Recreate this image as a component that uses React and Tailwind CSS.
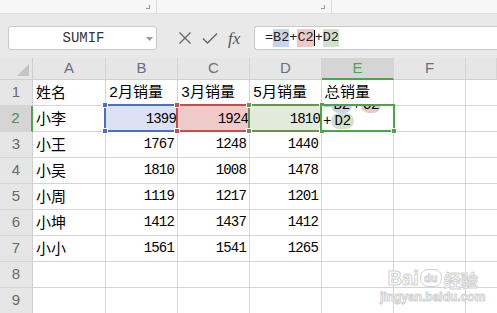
import React from "react";

const cjk = { fontFamily: '"Noto Sans CJK SC", "Noto Sans", sans-serif' };
const mono = { fontFamily: '"Liberation Mono", "DejaVu Sans Mono", monospace' };

const cols = ["A", "B", "C", "D", "E", "F", ""];
const data = [
  ["姓名", "2月销量", "3月销量", "5月销量", "总销量"],
  ["小李", "", "", "", ""],
  ["小王", "1767", "1248", "1440", ""],
  ["小吴", "1810", "1008", "1478", ""],
  ["小周", "1119", "1217", "1201", ""],
  ["小坤", "1412", "1437", "1412", ""],
  ["小小", "1561", "1541", "1265", ""],
  ["", "", "", "", ""],
  ["", "", "", "", ""],
];

function Handle({ cls }) {
  return <div className={`absolute w-[6px] h-[6px] border border-white ${cls}`} />;
}

function SelBox({ left, top, border, fill, handle, children }) {
  return (
    <div
      className={`absolute w-[75px] h-[28px] border-2 ${border}`}
      style={{ left, top }}
    >
      <div className={`w-full h-full ${fill}`} />
      <Handle cls={`-left-[4px] -top-[4px] ${handle}`} />
      <Handle cls={`-right-[4px] -top-[4px] ${handle}`} />
      <Handle cls={`-left-[4px] -bottom-[4px] ${handle}`} />
      <Handle cls={`-right-[4px] -bottom-[4px] ${handle}`} />
      {children}
    </div>
  );
}

export default function App() {
  return (
    <div className="w-[497px] h-[313px] overflow-hidden bg-white relative">
      {/* top strip */}
      <div className="h-[14px] bg-[#f7f7f7] border-b border-[#e0e0e0] flex">
        <div className="w-[157px] border-r border-[#dcdcdc] relative">
          <div className="absolute left-[146px] top-[5px] w-[4px] h-[4px] border-r border-b border-[#999]" />
        </div>
        <div className="w-[175px] border-r border-[#dcdcdc] relative">
          <div className="absolute left-[164px] top-[5px] w-[4px] h-[4px] border-r border-b border-[#999]" />
        </div>
      </div>
      {/* toolbar */}
      <div className="h-[44px] bg-[#e9e9e9] flex items-start pt-[12px]">
        <div className="ml-[8px] w-[149px] h-[24px] bg-white border border-[#c9c9c9] rounded-[3px] flex items-center relative">
          <span className="flex-1 text-center text-[14px] text-[#333] pl-[2px]" style={mono}>SUMIF</span>
          <svg width="7" height="4" className="absolute right-[3px] top-[10px]" viewBox="0 0 7 4">
            <path d="M0 0 L7 0 L3.5 4 Z" fill="#999" />
          </svg>
        </div>
        <div className="w-[97px] h-[24px] flex items-center">
          <svg width="14" height="14" viewBox="0 0 14 14" className="ml-[21px]">
            <path d="M1.5 1.5 L12.5 12.5 M12.5 1.5 L1.5 12.5" stroke="#666" strokeWidth="1.3" fill="none" />
          </svg>
          <svg width="16" height="13" viewBox="0 0 16 13" className="ml-[10px]">
            <path d="M1 6.5 L5.5 11 L15 1.5" stroke="#666" strokeWidth="1.4" fill="none" />
          </svg>
          <span
            className="ml-[10px] text-[17px] italic text-[#555] leading-none"
            style={{ fontFamily: '"Liberation Serif", serif' }}
          >
            fx
          </span>
        </div>
        <div className="flex-1 h-[24px] bg-white border border-[#c9c9c9] border-r-0 rounded-l-[3px] flex items-center pl-[10px] text-[13.5px] text-[#222]" style={mono}>
          <span>=</span>
          <span className="bg-[#c8d4ee] h-[18px] leading-[18px]">B2</span>
          <span>+</span>
          <span className="bg-[#ecc9c9] h-[18px] leading-[18px]">C2</span>
          <span className="w-px h-[16px] bg-black" />
          <span>+</span>
          <span className="bg-[#d3e0cd] h-[18px] leading-[18px]">D2</span>
        </div>
      </div>
      {/* grid */}
      <div className="relative">
        <div className="grid grid-cols-[33px_73px_72px_72px_72px_72px_72px_1fr]">
          <div className="h-[22px] bg-[#e6e6e6] border-r border-b border-[#cfcfcf] relative">
            <svg width="12" height="12" className="absolute right-[3px] bottom-[3px]" viewBox="0 0 12 12">
              <path d="M12 0 L12 12 L0 12 Z" fill="#c4c4c4" />
            </svg>
          </div>
          {cols.map((c, i) => (
            <div
              key={i}
              className={`h-[22px] border-r border-[#d6d6d6] flex items-center justify-center text-[15px] ${
                c === "E"
                  ? "bg-[#d5d5d5] border-b-2 border-b-[#4ea44a] text-[#4ea44a]"
                  : "bg-[#e6e6e6] border-b border-b-[#cfcfcf] text-[#6a7080]"
              }`}
              style={{ fontFamily: '"Liberation Sans", Arial, sans-serif' }}
            >
              {c}
            </div>
          ))}
          {data.map((row, ri) => (
            <React.Fragment key={ri}>
              <div
                className={`h-[26px] border-b border-[#d6d6d6] flex items-center justify-center text-[15px] ${
                  ri === 1
                    ? "bg-[#d5d5d5] border-r-2 border-r-[#4ea44a] text-[#4a8a5a]"
                    : "bg-[#e6e6e6] border-r border-r-[#cfcfcf] text-[#6a6a6a]"
                }`}
                style={{ fontFamily: '"Liberation Sans", Arial, sans-serif' }}
              >
                {ri + 1}
              </div>
              {row.map((v, ci) => (
                <div
                  key={ci}
                  className={`h-[26px] border-r border-b border-[#d4d4d4] flex items-center text-black ${
                    ci === 0 || ri === 0 ? "pl-[3px] text-[15px]" : "justify-end pr-[3px] text-[14px] tracking-[-0.06em]"
                  }`}
                  style={ci === 0 || ri === 0 ? cjk : mono}
                >
                  {ri === 0 && ci > 0 ? (
                    <span>
                      <span style={mono} className="text-[15px]">{v[0]}</span>
                      {v.slice(1)}
                    </span>
                  ) : (
                    v
                  )}
                </div>
              ))}
              <div className="h-[26px] border-r border-b border-[#d4d4d4]" />
              <div className="h-[26px] border-b border-[#d4d4d4]" />
            </React.Fragment>
          ))}
        </div>

        {/* selection overlays */}
        <SelBox left={104} top={46} border="border-[#4b6fc9]" fill="bg-[#dce2f4]" handle="bg-[#4b6fc9]">
          <span className="absolute right-[1px] top-[3px] text-[14px] tracking-[-0.06em]" style={mono}>1399</span>
        </SelBox>
        <SelBox left={176} top={46} border="border-[#c0504d]" fill="bg-[#efcaca]" handle="bg-[#c0504d]">
          <span className="absolute right-[1px] top-[3px] text-[14px] tracking-[-0.06em]" style={mono}>1924</span>
        </SelBox>
        <SelBox left={248} top={46} border="border-[#6e9150]" fill="bg-[#e2eadb]" handle="bg-[#6e9150]">
          <span className="absolute right-[1px] top-[3px] text-[14px] tracking-[-0.06em]" style={mono}>1810</span>
        </SelBox>
        {/* E2 edit cell */}
        <div className="absolute left-[320px] top-[46px] w-[75px] h-[28px] border-2 border-[#4ea44a] bg-white">
          <div className="w-full h-full overflow-hidden flex flex-col justify-end pl-[1px] pb-[1px] text-[14px] text-black" style={mono}>
            <div className="leading-[16px] flex items-center">
              <span>=</span>
              <span className="bg-[#c8d4ee] rounded-full px-[2px]">B2</span>
              <span>+</span>
              <span className="bg-[#ecc9c9] rounded-full px-[2px]">C2</span>
            </div>
            <div className="leading-[16px] h-[18px] flex items-center">
              <span>+</span>
              <span className="bg-[#d3e0cd] rounded-full px-[3px] leading-[16px]">D2</span>
            </div>
          </div>
          <div className="absolute -right-[4px] -bottom-[4px] w-[6px] h-[6px] bg-[#4ea44a] border border-white" />
        </div>

        {/* watermark */}
        <div className="absolute left-[380px] top-[210px] flex flex-col items-center text-white [-webkit-text-stroke:1px_#d2d2d2] pointer-events-none" style={{ fontFamily: '"Liberation Sans", Arial, sans-serif' }}>
          <div className="flex items-end font-bold leading-none">
            <span className="text-[20px]">Bai</span>
            <span className="ml-[1px] mb-[1px] w-[22px] h-[18px] rounded-[8px] border-[1.5px] border-[#d2d2d2] text-[11px] flex items-center justify-center">du</span>
            <span className="ml-[2px] text-[17px]" style={cjk}>经验</span>
          </div>
          <div className="text-[12px] leading-none mt-[3px] font-bold">jingyan.baidu.com</div>
        </div>
      </div>
    </div>
  );
}
